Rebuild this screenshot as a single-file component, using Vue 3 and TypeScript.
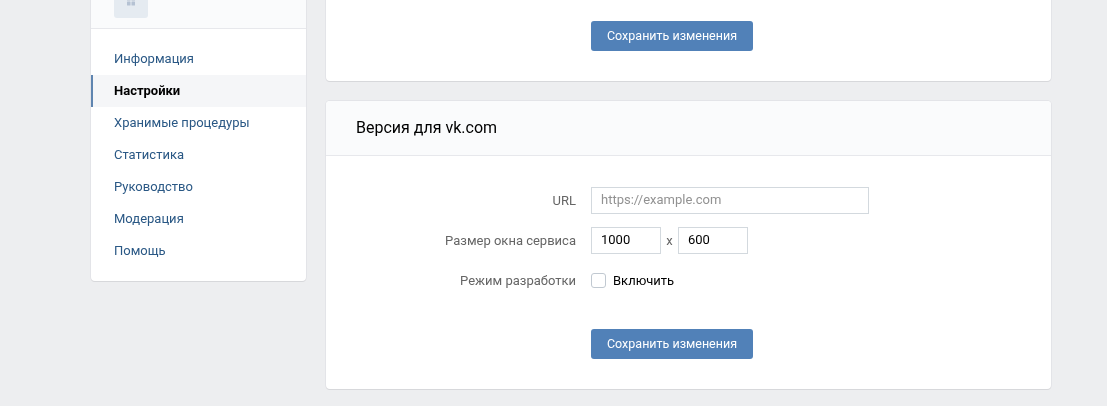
<script setup lang="ts">
const menu = [
  { name: 'Информация', active: false },
  { name: 'Настройки', active: true },
  { name: 'Хранимые процедуры', active: false },
  { name: 'Статистика', active: false },
  { name: 'Руководство', active: false },
  { name: 'Модерация', active: false },
  { name: 'Помощь', active: false },
]
</script>

<template>
  <div class="page">
    <aside class="side card">
      <div class="side-head">
        <div class="app-icon">
          <svg width="10" height="10" viewBox="0 0 10 10">
            <rect x="1" y="0" width="3.5" height="1" fill="#ccd5e0" />
            <rect x="5.5" y="0" width="3.5" height="1" fill="#ccd5e0" />
            <rect x="1" y="1.5" width="3.5" height="4" rx="0.5" fill="#b5c2d3" />
            <rect x="5.5" y="1.5" width="3.5" height="4" rx="0.5" fill="#b5c2d3" />
          </svg>
        </div>
      </div>
      <nav class="menu">
        <a
          v-for="item in menu"
          :key="item.name"
          class="menu-item"
          :class="{ active: item.active }"
        >{{ item.name }}</a>
      </nav>
    </aside>

    <main class="content">
      <section class="card top-card">
        <button class="save">Сохранить изменения</button>
      </section>

      <section class="card">
        <h2 class="card-head">Версия для vk.com</h2>
        <div class="form">
          <div class="row">
            <label class="label">URL</label>
            <input class="input wide" placeholder="https://example.com" />
          </div>
          <div class="row">
            <label class="label">Размер окна сервиса</label>
            <input class="input small" value="1000" />
            <span class="times">x</span>
            <input class="input small" value="600" />
          </div>
          <div class="row">
            <label class="label">Режим разработки</label>
            <span class="check"></span>
            <span class="check-text">Включить</span>
          </div>
          <div class="actions">
            <button class="save">Сохранить изменения</button>
          </div>
        </div>
      </section>
    </main>
  </div>
</template>

<style>
html, body {
  margin: 0;
  height: 100%;
  background: #edeef0;
  overflow: hidden;
}
</style>

<style scoped>
.page {
  display: flex;
  align-items: flex-start;
  gap: 20px;
  margin-top: -100px;
  padding-left: 91px;
  font-family: Roboto, "Liberation Sans", sans-serif;
  font-size: 13px;
  color: #000;
  will-change: transform;
}

.card {
  background: #fff;
  border-radius: 4px;
  box-shadow: 0 1px 0 0 #d7d8db, 0 0 0 1px #e3e4e8;
}

.side {
  width: 215px;
  flex: none;
  padding-bottom: 14px;
}

.side-head {
  height: 129px;
  box-sizing: border-box;
  display: flex;
  align-items: flex-end;
  padding: 0 0 10px 23px;
  background: #fafbfc;
  border-bottom: 1px solid #e7e8ec;
  border-radius: 4px 4px 0 0;
}

.app-icon {
  width: 34px;
  height: 34px;
  display: flex;
  align-items: flex-end;
  justify-content: center;
  padding-bottom: 8px;
  box-sizing: border-box;
  background: #e5ebf1;
  border-radius: 3px;
}

.menu {
  padding-top: 14px;
}

.menu-item {
  display: block;
  height: 32px;
  line-height: 32px;
  padding-left: 23px;
  color: #2a5885;
}

.menu-item.active {
  padding-left: 21px;
  border-left: 2px solid #5f85b0;
  background: #f5f6f8;
  color: #000;
  font-weight: 700;
}

.content {
  width: 725px;
  flex: none;
  display: flex;
  flex-direction: column;
  gap: 20px;
}

.top-card {
  height: 181px;
  box-sizing: border-box;
  padding: 121px 0 0 265px;
}

.card-head {
  margin: 0;
  height: 55px;
  box-sizing: border-box;
  padding-left: 30px;
  line-height: 54px;
  font-size: 16px;
  font-weight: 400;
  background: #fafbfc;
  border-bottom: 1px solid #e7e8ec;
  border-radius: 4px 4px 0 0;
}

.form {
  padding: 31px 0 30px;
}

.row {
  display: flex;
  align-items: center;
  height: 27px;
  margin-bottom: 13px;
}

.label {
  width: 250px;
  margin-right: 15px;
  text-align: right;
  color: #656565;
}

.input {
  height: 27px;
  box-sizing: border-box;
  padding: 0 9px 2px;
  border: 1px solid #d3d9de;
  border-radius: 0;
  outline: none;
  background: #fff;
  font: inherit;
  color: #000;
}

.input::placeholder {
  color: #929292;
  opacity: 1;
}

.wide {
  width: 278px;
}

.small {
  width: 70px;
}

.times {
  width: 17px;
  text-align: center;
  color: #656565;
}

.check {
  width: 15px;
  height: 15px;
  box-sizing: border-box;
  border: 1px solid #c1c9d1;
  border-radius: 3px;
  background: #fff;
}

.check-text {
  margin-left: 7px;
}

.actions {
  margin-top: 35px;
  padding-left: 265px;
}

.save {
  display: block;
  width: 162px;
  height: 30px;
  padding: 0 0 2px;
  border: 0;
  border-radius: 3px;
  background: #5181b8;
  color: #fff;
  font: inherit;
  font-size: 12.5px;
}
</style>
